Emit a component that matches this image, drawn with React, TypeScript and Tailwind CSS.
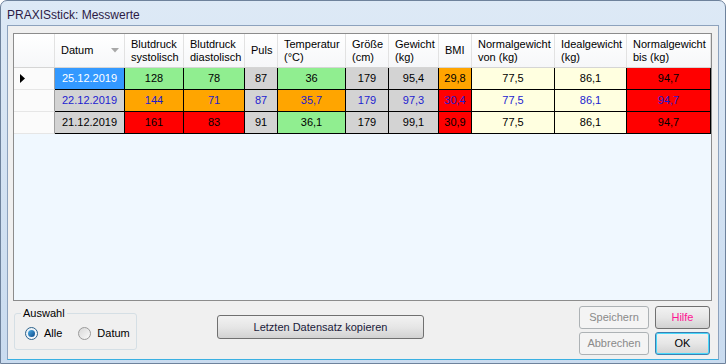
import React from 'react';

interface Column {
  key: string;
  width: number;
  label: string[];
}

interface Cell {
  value: string;
  bg: string;
}

const GRAY = 'bg-[#d3d3d3]';
const GREEN = 'bg-[#90ee90]';
const ORANGE = 'bg-[#ffa500]';
const RED = 'bg-[#ff0000]';
const CREAM = 'bg-[#ffffe0]';
const SELECTED = 'bg-[#3399ff]';

export default function App() {
  const columns: Column[] = [
    { key: 'datum', width: 70, label: ['Datum'] },
    { key: 'sys', width: 59, label: ['Blutdruck', 'systolisch'] },
    { key: 'dia', width: 61, label: ['Blutdruck', 'diastolisch'] },
    { key: 'puls', width: 33, label: ['Puls'] },
    { key: 'temp', width: 68, label: ['Temperatur', '(°C)'] },
    { key: 'groesse', width: 43, label: ['Größe', '(cm)'] },
    { key: 'gewicht', width: 50, label: ['Gewicht', '(kg)'] },
    { key: 'bmi', width: 33, label: ['BMI'] },
    { key: 'von', width: 83, label: ['Normalgewicht', 'von (kg)'] },
    { key: 'ideal', width: 72, label: ['Idealgewicht', '(kg)'] },
    { key: 'bis', width: 84, label: ['Normalgewicht', 'bis (kg)'] },
  ];

  const rows: { text: string; cells: Cell[] }[] = [
    {
      text: 'text-black',
      cells: [
        { value: '25.12.2019', bg: SELECTED },
        { value: '128', bg: GREEN },
        { value: '78', bg: GREEN },
        { value: '87', bg: GRAY },
        { value: '36', bg: GREEN },
        { value: '179', bg: GRAY },
        { value: '95,4', bg: GRAY },
        { value: '29,8', bg: ORANGE },
        { value: '77,5', bg: CREAM },
        { value: '86,1', bg: CREAM },
        { value: '94,7', bg: RED },
      ],
    },
    {
      text: 'text-[#1c1cd0]',
      cells: [
        { value: '22.12.2019', bg: GRAY },
        { value: '144', bg: ORANGE },
        { value: '71', bg: ORANGE },
        { value: '87', bg: GRAY },
        { value: '35,7', bg: ORANGE },
        { value: '179', bg: GRAY },
        { value: '97,3', bg: GRAY },
        { value: '30,4', bg: RED },
        { value: '77,5', bg: CREAM },
        { value: '86,1', bg: CREAM },
        { value: '94,7', bg: RED },
      ],
    },
    {
      text: 'text-black',
      cells: [
        { value: '21.12.2019', bg: GRAY },
        { value: '161', bg: RED },
        { value: '83', bg: RED },
        { value: '91', bg: GRAY },
        { value: '36,1', bg: GREEN },
        { value: '179', bg: GRAY },
        { value: '99,1', bg: GRAY },
        { value: '30,9', bg: RED },
        { value: '77,5', bg: CREAM },
        { value: '86,1', bg: CREAM },
        { value: '94,7', bg: RED },
      ],
    },
  ];

  return (
    <div className="w-[726px] h-[364px] flex flex-col border border-[#6e829c] rounded-t-[7px] bg-gradient-to-b from-[#dde9f6] to-[#c9dbef] font-['Liberation_Sans',Arial,sans-serif] text-[11px] text-black overflow-hidden">
      {/* Title bar */}
      <div className="h-[24px] shrink-0 pl-[6px] pt-[3px] flex items-center text-[12px] text-[#2c1a45]">
        PRAXISstick: Messwerte
      </div>

      <div className="mx-[6px] mb-[3px] flex-1 flex flex-col bg-[#f0f0f0] border border-[#8da2bd] border-b-[#3ab0e2]">
        {/* Data grid */}
        <div className="mt-[7px] ml-[5px] w-[699px] h-[268px] shrink-0 border border-[#8c8c8c] bg-[#f0f8ff]">
          {/* Header */}
          <div className="flex h-[34px] border-b border-[#d5d5d5] bg-gradient-to-b from-white to-[#f6f7f9]">
            <div className="w-[41px] h-full border-r border-[#e2e2e2]" />
            {columns.map((col) => (
              <div
                key={col.key}
                style={{ width: col.width }}
                className="h-full border-r border-[#e2e2e2] flex items-center pl-[6px] pr-[4px] leading-[13px]"
              >
                <div className="flex-1">
                  {col.label.map((line, i) => (
                    <div key={i} className="whitespace-nowrap">{line}</div>
                  ))}
                </div>
                {col.key === 'datum' && (
                  <svg width="8" height="5" viewBox="0 0 8 5" className="mr-[1px]">
                    <path d="M0 0 H8 L4 4.5 Z" fill="#a8a8a8" />
                  </svg>
                )}
              </div>
            ))}
          </div>

          {/* Rows */}
          {rows.map((row, r) => (
            <div key={r} className={`flex h-[22px] ${row.text}`}>
              <div className="w-[41px] h-full bg-[#fbfbfb] border-r border-[#a0a0a0] border-b border-b-[#e6e6e6] flex items-center pl-[6px]">
                {r === 0 && (
                  <svg width="5" height="9" viewBox="0 0 5 9">
                    <path d="M0 0 L5 4.5 L0 9 Z" fill="#000" />
                  </svg>
                )}
              </div>
              {row.cells.map((cell, c) => (
                <div
                  key={c}
                  style={{ width: columns[c].width }}
                  className={`h-full border-r border-b border-black flex items-center justify-center ${cell.bg} ${cell.bg === SELECTED ? 'text-white' : ''}`}
                >
                  {cell.value}
                </div>
              ))}
            </div>
          ))}
        </div>

        {/* Bottom controls */}
        <div className="flex items-start">
          {/* Auswahl group box */}
          <div className="relative ml-[6px] mt-[12px] w-[123px] h-[37px] border border-[#d5dfe5] rounded-[3px]">
            <span className="absolute -top-[8px] left-[6px] px-[2px] bg-[#f0f0f0] leading-[14px]">Auswahl</span>
            <div className="flex items-center h-full pt-[4px] pl-[10px]">
              <span className="w-[13px] h-[13px] rounded-full border border-[#2c628b] bg-gradient-to-br from-[#e6eef5] to-[#f9fbfd] flex items-center justify-center">
                <span className="w-[7px] h-[7px] rounded-full bg-gradient-to-br from-[#4fb0e8] to-[#0b4a8a]" />
              </span>
              <span className="ml-[6px]">Alle</span>
              <span className="ml-[16px] w-[13px] h-[13px] rounded-full border border-[#9a9a9a] bg-gradient-to-br from-[#d8d8d8] to-[#fafafa]" />
              <span className="ml-[6px]">Datum</span>
            </div>
          </div>

          <button className="ml-[80px] mt-[14px] w-[207px] h-[24px] border border-[#707070] rounded-[3px] bg-gradient-to-b from-[#f2f2f2] via-[#e6e6e6] to-[#d2d2d2] text-[#1a1a3a]">
            Letzten Datensatz kopieren
          </button>

          <div className="ml-[155px] mt-[5px] flex flex-col gap-[3px]">
            <button className="w-[70px] h-[23px] border border-[#adb2b5] rounded-[3px] bg-[#f4f4f4] text-[#8a8a8a]">
              Speichern
            </button>
            <button className="w-[70px] h-[23px] border border-[#adb2b5] rounded-[3px] bg-[#f4f4f4] text-[#8a8a8a]">
              Abbrechen
            </button>
          </div>

          <div className="ml-[6px] mt-[5px] flex flex-col gap-[3px]">
            <button className="w-[55px] h-[23px] border border-[#707070] rounded-[3px] bg-gradient-to-b from-[#f2f2f2] via-[#e6e6e6] to-[#d2d2d2] text-[#ff1493]">
              Hilfe
            </button>
            <button className="w-[55px] h-[23px] border border-[#3c7fb1] rounded-[3px] shadow-[inset_0_0_0_1px_#48d8fb] bg-gradient-to-b from-[#f2f2f2] via-[#e6e6e6] to-[#d2d2d2] text-black">
              OK
            </button>
          </div>
        </div>
      </div>
    </div>
  );
}
